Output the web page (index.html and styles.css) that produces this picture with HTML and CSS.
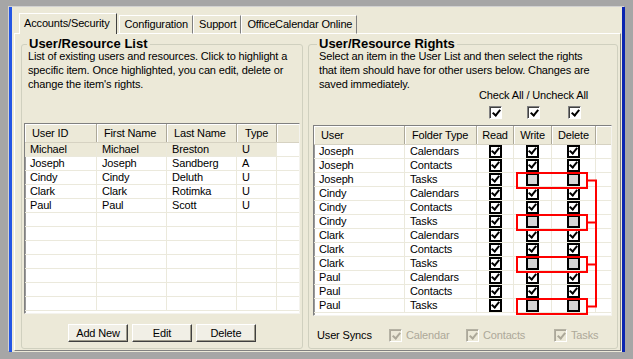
FILE: index.html
```html
<!DOCTYPE html>
<html lang="en">
<head>
    <meta charset="UTF-8">
    <title>OfficeCalendar - Accounts/Security</title>
    <link rel="stylesheet" href="styles.css">
</head>
<body>
    <div class="window">
        <!-- tab strip -->
        <div class="tabs">
            <div class="tab active">Accounts/Security</div>
            <div class="tab">Configuration</div>
            <div class="tab">Support</div>
            <div class="tab">OfficeCalendar Online</div>
        </div>

        <div class="panel">
            <!-- left: user list -->
            <fieldset class="group group-users">
                <legend>User/Resource List</legend>
                <p class="desc">List of existing users and resources. Click to highlight a<br>specific item. Once highlighted, you can edit, delete or<br>change the item's rights.</p>

                <div class="list users">
                    <div class="row head">
                        <span>User ID</span><span>First Name</span><span>Last Name</span><span class="type">Type</span><span></span>
                    </div>
                    <div class="row selected"><span>Michael</span><span>Michael</span><span>Breston</span><span>U</span><span></span></div>
                    <div class="row"><span>Joseph</span><span>Joseph</span><span>Sandberg</span><span>A</span><span></span></div>
                    <div class="row"><span>Cindy</span><span>Cindy</span><span>Deluth</span><span>U</span><span></span></div>
                    <div class="row"><span>Clark</span><span>Clark</span><span>Rotimka</span><span>U</span><span></span></div>
                    <div class="row"><span>Paul</span><span>Paul</span><span>Scott</span><span>U</span><span></span></div>
                    <div class="row"><span></span><span></span><span></span><span></span><span></span></div>
                    <div class="row"><span></span><span></span><span></span><span></span><span></span></div>
                    <div class="row"><span></span><span></span><span></span><span></span><span></span></div>
                    <div class="row"><span></span><span></span><span></span><span></span><span></span></div>
                    <div class="row"><span></span><span></span><span></span><span></span><span></span></div>
                    <div class="row"><span></span><span></span><span></span><span></span><span></span></div>
                    <div class="row"><span></span><span></span><span></span><span></span><span></span></div>
                </div>

                <div class="buttons">
                    <button class="btn">Add New</button>
                    <button class="btn">Edit</button>
                    <button class="btn">Delete</button>
                </div>
            </fieldset>

            <!-- right: rights per folder -->
            <fieldset class="group group-rights">
                <legend>User/Resource Rights</legend>
                <p class="desc">Select an item in the User List and then select the rights<br>that item should have for other users below. Changes are<br>saved immediately.</p>

                <div class="checkall-label">Check All / Uncheck All</div>
                <div class="checkall">
                    <span class="cb sunken on"></span>
                    <span class="cb sunken on"></span>
                    <span class="cb sunken on"></span>
                </div>

                <div class="list rights" id="rights">
                    <div class="row head">
                        <span>User</span><span>Folder Type</span><span class="c">Read</span><span class="c">Write</span><span class="c">Delete</span><span></span>
                    </div>

                    <!-- red marks over the Tasks rows -->
                    <svg class="marks" width="299" height="191" viewBox="0 0 299 191">
                        <g fill="none" stroke="#f00" stroke-width="2">
                            <rect x="204" y="48" width="70" height="15"/>
                            <rect x="204" y="90" width="70" height="15"/>
                            <rect x="204" y="132" width="70" height="15"/>
                            <rect x="204" y="174" width="70" height="15"/>
                            <path d="M274 55.5H283V181.5H274M274 97.5H283M274 139.5H283"/>
                        </g>
                    </svg>
                </div>

                <div class="syncs">
                    <span>User Syncs</span>
                    <span class="sync"><span class="cb disabled on"></span>Calendar</span>
                    <span class="sync"><span class="cb disabled on"></span>Contacts</span>
                    <span class="sync"><span class="cb disabled on"></span>Tasks</span>
                </div>
            </fieldset>
        </div>
    </div>

    <script>
        // rows of the rights list
        const rights = [
            ['Joseph', 'Calendars', 1, 1, 1],
            ['Joseph', 'Contacts', 1, 1, 1],
            ['Joseph', 'Tasks', 1, 0, 0],
            ['Cindy', 'Calendars', 1, 1, 1],
            ['Cindy', 'Contacts', 1, 1, 1],
            ['Cindy', 'Tasks', 1, 0, 0],
            ['Clark', 'Calendars', 1, 1, 1],
            ['Clark', 'Contacts', 1, 1, 1],
            ['Clark', 'Tasks', 1, 0, 0],
            ['Paul', 'Calendars', 1, 1, 1],
            ['Paul', 'Contacts', 1, 1, 1],
            ['Paul', 'Tasks', 1, 0, 0]
        ];

        const list = document.getElementById('rights');
        const marks = list.querySelector('.marks');

        rights.forEach(r => {
            const row = document.createElement('div');
            row.className = 'row';
            let html = `<span>${r[0]}</span><span>${r[1]}</span>`;
            for (let i = 2; i < 5; i++) {
                html += `<span class="c"><span class="cb ${r[i] ? 'on' : 'off'}"></span></span>`;
            }
            html += '<span></span>';
            row.innerHTML = html;
            list.insertBefore(row, marks);
        });
    </script>
</body>
</html>
```

FILE: styles.css
```css
body {
    margin: 0;
    background: #a6a6a6;
    font-family: 'Liberation Sans', Arial, sans-serif;
    font-size: 11px;
    letter-spacing: -0.15px;
    color: #000;
}

.window {
    margin: 7px 8px 0 9px;
    height: 345px;
    box-sizing: border-box;
    border-left: 3px solid #2456e4;
    border-right: 3px solid #0a24b0;
    background: #ece9d8;
    box-shadow: -1px -1px 0 #d2d2d2;
    display: flex;
    flex-direction: column;
}

/* tabs */
.tabs {
    display: flex;
    align-items: flex-end;
    height: 27px;
    padding-left: 7px;
    box-sizing: border-box;
    position: relative;
    z-index: 1;
}

.tab {
    height: 19px;
    box-sizing: border-box;
    line-height: 17px;
    padding: 0 4px 0 5px;
    border-top: 1px solid #fff;
    border-left: 1px solid #fff;
    border-right: 1px solid #808080;
    border-bottom: 1px solid #fff;
    white-space: nowrap;
}

.tab.active {
    height: 21px;
    line-height: 19px;
    padding: 0 6px 0 4px;
    margin-right: 2px;
    border-bottom: none;
    border-right-color: #404040;
    background: #ece9d8;
}

.panel {
    flex: 1;
    margin: -1px 1px 1px 2px;
    border: 1px solid;
    border-color: #fff #808080 #808080 #fff;
    display: flex;
    gap: 5px;
    padding: 3px 3px 1px 6px;
}

/* group boxes */
.group {
    margin: 0;
    border: 1px solid #d0d0bf;
    border-radius: 3px;
    display: flex;
    flex-direction: column;
    box-sizing: border-box;
    min-width: 0;
    flex: none;
}

.group legend {
    font-weight: bold;
    font-size: 13px;
    line-height: 14px;
    letter-spacing: 0;
    padding: 0 2px;
}

.group-users {
    width: 282px;
    padding: 0 2px 0 2px;
}

.group-users legend {
    margin-left: 3px;
}

.group-rights {
    width: 310px;
    padding: 0 5px 0 4px;
}

.group-rights legend {
    margin-left: 4px;
}

.desc {
    margin: -2px 0 0;
    line-height: 14px;
    white-space: nowrap;
}

.group-users .desc {
    padding-left: 4px;
}

.group-rights .desc {
    padding-left: 6px;
}

/* list views */
.list {
    background: #fff;
    border: 1px solid;
    border-color: #808080 #f4f3ee #f4f3ee #808080;
    box-shadow: inset 1px 0 0 #9a9a9a;
    height: 191px;
    box-sizing: border-box;
    position: relative;
    overflow: hidden;
}

.users {
    width: 276px;
    margin-top: 32px;
}

.rights {
    width: 299px;
    margin-top: 6px;
}

.row {
    display: grid;
    height: 14px;
    box-sizing: border-box;
    border-bottom: 1px solid #ebe9dc;
    line-height: 13px;
}

.users .row {
    grid-template-columns: 72px 70px 70px 40px 1fr;
}

.rights .row {
    grid-template-columns: 91px 72px 37px 38px 44px 1fr;
}

.row > span {
    border-right: 1px solid #ebe9dc;
    padding-left: 5px;
    white-space: nowrap;
    overflow: hidden;
}

.row > span:last-child {
    border-right: none;
}

.row > .c {
    padding-left: 0;
    display: flex;
    justify-content: center;
    align-items: center;
}

.row.head {
    height: 19px;
    line-height: 18px;
    background: #ece9d8;
    border-bottom: 1px solid #d6d2c2;
}

.row.head > span {
    border-right: 1px solid #aca899;
    box-shadow: inset 1px 1px 0 #fff;
    padding-left: 7px;
}

.row.head > span:last-child {
    border-right: none;
}

.row.head > .c {
    padding-left: 0;
}

.row.head > .type {
    padding-left: 8px;
}

.row.selected > span:not(:last-child) {
    background: #ece9d8;
}

.marks {
    position: absolute;
    left: -1px;
    top: -1px;
}

/* checkboxes */
.cb {
    display: inline-block;
    width: 13px;
    height: 13px;
    box-sizing: border-box;
    border: 2px solid #000;
    background: #fff;
    position: relative;
    flex: none;
}

.cb.off {
    background: #d6d6d6;
}

.cb.on::after {
    content: '';
    position: absolute;
    left: 2px;
    top: -1px;
    width: 3px;
    height: 6px;
    border: solid #000;
    border-width: 0 2px 2px 0;
    transform: rotate(40deg);
}

.cb.sunken {
    border: 1px solid;
    border-color: #808080 #fff #fff #808080;
    box-shadow: inset 1px 1px 0 #404040;
}

.cb.sunken.on::after {
    left: 4px;
    top: 1px;
}

.cb.disabled {
    border: 1px solid;
    border-color: #b5b2a4 #fff #fff #b5b2a4;
    box-shadow: inset 1px 1px 0 #aca899;
    background: #ece9d8;
}

.cb.disabled.on::after {
    left: 4px;
    top: 1px;
    border-color: #aca899;
}

.checkall-label {
    margin: -3px 0 0 166px;
    line-height: 14px;
}

.checkall {
    display: grid;
    grid-template-columns: 37px 38px 44px;
    margin: 4px 0 0 164px;
    justify-items: center;
}

/* buttons */
.buttons {
    display: flex;
    justify-content: center;
    gap: 4px;
    margin-top: 10px;
}

.btn {
    width: 60px;
    height: 18px;
    padding: 0;
    font-family: inherit;
    font-size: 11px;
    letter-spacing: -0.15px;
    color: #000;
    background: #f1efe6;
    border: 1px solid;
    border-color: #fff #404040 #404040 #fff;
    box-shadow: inset -1px -1px 0 #9d9a8a;
}

/* user syncs */
.syncs {
    display: grid;
    grid-template-columns: 72px 77px 88px auto;
    align-items: center;
    height: 16px;
    margin-top: 11px;
    padding-left: 4px;
}

.sync {
    display: flex;
    align-items: center;
    gap: 4px;
    color: #aca899;
}
```
